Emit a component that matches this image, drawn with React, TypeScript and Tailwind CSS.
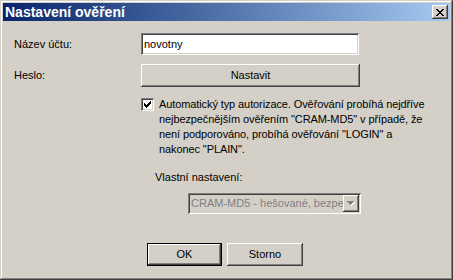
import React from "react";

const raised =
  "shadow-[inset_-1px_-1px_#404040,inset_1px_1px_#ffffff,inset_-2px_-2px_#808080,inset_2px_2px_#d4d0c8]";
const sunken =
  "shadow-[inset_1px_1px_#808080,inset_-1px_-1px_#ffffff,inset_2px_2px_#404040,inset_-2px_-2px_#d4d0c8]";

function WinButton({
  label,
  width,
  isDefault = false,
}: {
  label: string;
  width: string;
  isDefault?: boolean;
}) {
  return (
    <button
      type="button"
      className={`${width} h-[23px] bg-[#d4d0c8] text-black ${
        isDefault
          ? "shadow-[inset_0_0_0_1px_#000000,inset_-2px_-2px_#404040,inset_2px_2px_#ffffff,inset_-3px_-3px_#808080]"
          : raised
      } flex items-center justify-center`}
    >
      {label}
    </button>
  );
}

export default function App() {
  return (
    <div
      className="flex h-[280px] w-[453px] flex-col bg-[#d4d0c8] p-[3px] text-[11px] text-black shadow-[inset_-1px_-1px_#404040,inset_1px_1px_#d4d0c8,inset_-2px_-2px_#808080,inset_2px_2px_#ffffff]"
      style={{ fontFamily: '"Liberation Sans", Arial, sans-serif' }}
    >
      {/* title bar */}
      <div className="flex h-[18px] items-center justify-between bg-gradient-to-r from-[#0a246a] to-[#a6caf0] pl-[2px] pr-[2px]">
        <span className="text-[14px] font-bold leading-none text-white">
          Nastavení ověření
        </span>
        <button
          type="button"
          className={`flex h-[14px] w-[16px] items-center justify-center bg-[#d4d0c8] ${raised}`}
        >
          <svg width="8" height="7" viewBox="0 0 8 7" shapeRendering="crispEdges">
            <path
              d="M0 0h2v1h-2zM6 0h2v1h-2zM1 1h2v1h-2zM5 1h2v1h-2zM2 2h4v1h-4zM3 3h2v1h-2zM2 4h4v1h-4zM1 5h2v1h-2zM5 5h2v1h-2zM0 6h2v1h-2zM6 6h2v1h-2z"
              fill="#000"
            />
          </svg>
        </button>
      </div>

      {/* body */}
      <div className="flex flex-1 flex-col pl-[11px]">
        <div className="mt-[12px] flex h-[22px] items-center">
          <span className="w-[127px]">Název účtu:</span>
          <div className={`flex h-[22px] w-[218px] items-center bg-white pl-[3px] ${sunken}`}>
            novotny
          </div>
        </div>

        <div className="mt-[9px] flex h-[23px] items-center">
          <span className="w-[127px]">Heslo:</span>
          <WinButton label="Nastavit" width="w-[219px]" />
        </div>

        <div className="ml-[127px] mt-[10px] flex items-start">
          <div
            className={`mt-[1px] flex h-[13px] w-[13px] shrink-0 items-center justify-center bg-white ${sunken}`}
          >
            <svg width="7" height="7" viewBox="0 0 7 7" shapeRendering="crispEdges">
              <path
                d="M6 0h1v3h-1zM5 1h1v3h-1zM4 2h1v3h-1zM3 3h1v3h-1zM2 4h1v3h-1zM1 3h1v3h-1zM0 2h1v3h-1z"
                fill="#000"
              />
            </svg>
          </div>
          <p className="ml-[5px] leading-[15px] tracking-[-0.1px]">
            Automatický typ autorizace. Ověřování probíhá nejdříve
            <br />
            nejbezpečnějším ověřením "CRAM-MD5" v případě, že
            <br />
            není podporováno, probíhá ověřování "LOGIN" a
            <br />
            nakonec "PLAIN".
          </p>
        </div>

        <div className="ml-[141px] mt-[13px] leading-[15px]">Vlastní nastavení:</div>

        <div
          className={`ml-[174px] mt-[8px] flex h-[21px] w-[173px] items-center bg-[#d4d0c8] p-[2px] ${sunken}`}
        >
          <span className="flex-1 overflow-hidden whitespace-nowrap pl-[1px] text-[#808080]">
            CRAM-MD5 - hešované, bezpečné
          </span>
          <div className={`flex h-[17px] w-[16px] shrink-0 items-center justify-center ${raised}`}>
            <svg width="8" height="5" viewBox="0 0 8 5" shapeRendering="crispEdges">
              <path d="M1 1h7v1h-1v1h-1v1h-1v1h-1v-1h-1v-1h-1v-1h-1z" fill="#ffffff" />
              <path d="M0 0h7v1h-1v1h-1v1h-1v1h-1v-1h-1v-1h-1v-1h-1z" fill="#808080" />
            </svg>
          </div>
        </div>

        <div className="ml-[133px] mt-[29px] flex gap-[5px]">
          <WinButton label="OK" width="w-[75px]" isDefault />
          <WinButton label="Storno" width="w-[76px]" />
        </div>
      </div>
    </div>
  );
}
